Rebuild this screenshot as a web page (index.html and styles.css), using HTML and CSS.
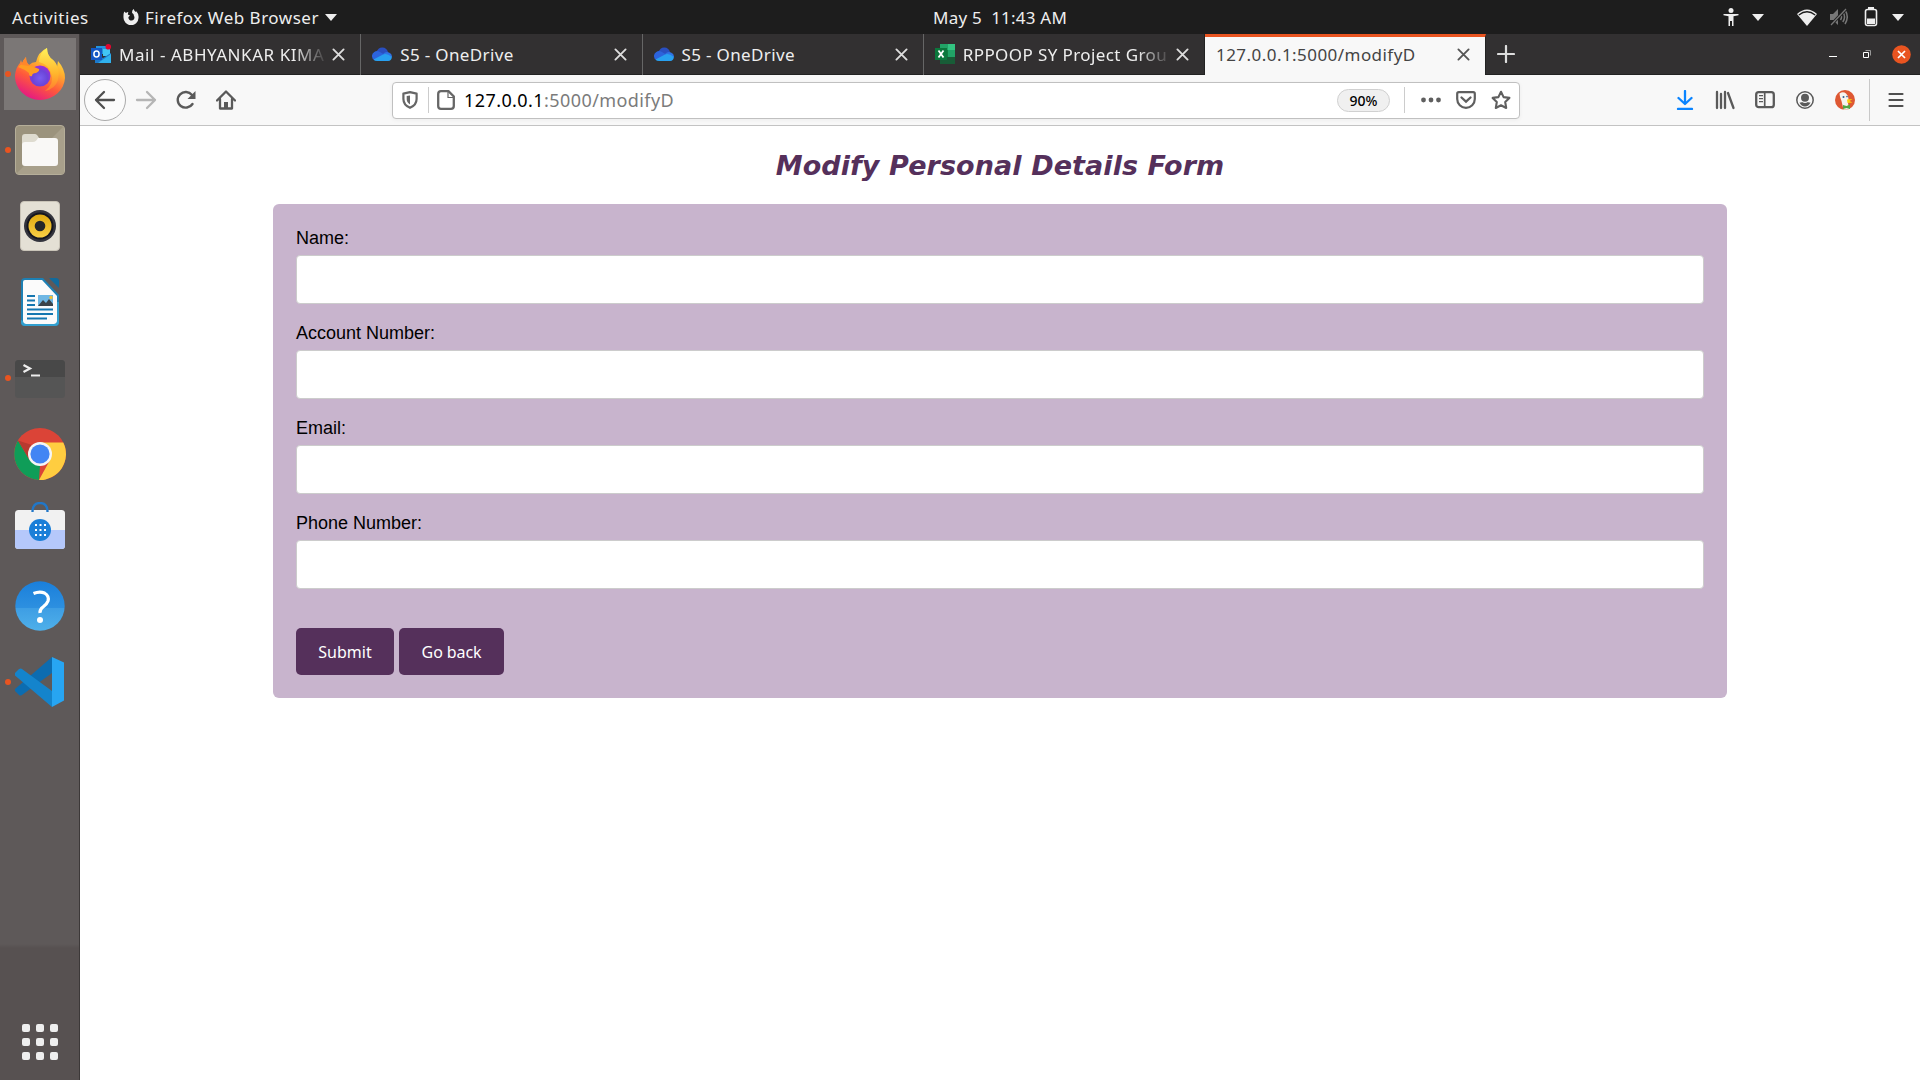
FILE: index.html
```
<!DOCTYPE html>
<html lang="en">
<head>
<meta charset="utf-8">
<title>127.0.0.1:5000/modifyD</title>
<link rel="stylesheet" href="styles.css">
</head>
<body>
<svg width="0" height="0" class="defs">
  <defs>
    <linearGradient id="ffBody" x1=".8" y1="0" x2=".3" y2="1"><stop offset="0" stop-color="#fff44f"/><stop offset=".35" stop-color="#ffb02e"/><stop offset=".65" stop-color="#ff5a3a"/><stop offset="1" stop-color="#e31587"/></linearGradient>
    <linearGradient id="ffFlame" x1=".5" y1="0" x2=".5" y2="1"><stop offset="0" stop-color="#fff25a"/><stop offset=".6" stop-color="#ffb52c"/><stop offset="1" stop-color="#ff7a30"/></linearGradient>
    <radialGradient id="ffGlobe" cx=".5" cy=".6" r=".6"><stop offset="0" stop-color="#7a5cf0"/><stop offset=".6" stop-color="#6b45d8"/><stop offset="1" stop-color="#a52ad8"/></radialGradient>
    <linearGradient id="helpTop" x1="0" y1="0" x2="0" y2="1"><stop offset="0" stop-color="#1a7fdb"/><stop offset=".54" stop-color="#2d90e0"/><stop offset=".55" stop-color="#3e9ee4"/><stop offset="1" stop-color="#4fb0ea"/></linearGradient>
    <linearGradient id="gold" x1="0" y1="0" x2="0" y2="1"><stop offset="0" stop-color="#e0aa10"/><stop offset="1" stop-color="#f9cf45"/></linearGradient>
    <symbol id="cloud" viewBox="0 0 20 14">
      <path d="M4.500 5.500Q6 .3 10.500.5q4 .2 5.500 4.500l-3 5-8-3z" fill="#2a4fc0"/>
      <path d="M0 9.500A5 5 0 0 1 7.500 4.800l6 3.500-11 4.700Q0 12 0 9.500z" fill="#2c63dc"/>
      <path d="M11 7q3-3 6-1.500A4.500 4.500 0 0 1 20 10l-3 2z" fill="#2f72e4"/>
      <path d="M1.500 12.500 11 7.500Q15 6 19.700 10a3.500 3.500 0 0 1-3.500 4H5q-2.500 0-3.500-1.500z" fill="#28a0f0"/>
    </symbol>
    <symbol id="close" viewBox="0 0 14 14"><path d="M1.500 1.500l11 11m0-11l-11 11" fill="none" stroke="currentColor" stroke-width="2" stroke-linecap="round"/></symbol>
    <symbol id="caret" viewBox="0 0 12 7"><path d="M0 0h12L6 7z" fill="currentColor"/></symbol>
  </defs>
</svg>

<header class="topbar">
  <span class="activities">Activities</span>
  <svg class="app-icon" viewBox="0 0 16 16"><path d="M1.200 2.500 3 4q1-1 2.300-1L4.800 5.500 7 6.500 5.500 8a3 3 0 1 0 5.500-1q0-2-1.800-3Q8.500 1.500 10.800 0q.2 2 2 3l.5-.8Q16 5 15.500 9A7.500 7.500 0 0 1 .5 8.500Q.3 5 1.200 2.500z" fill="#eee"/></svg>
  <span class="app-name">Firefox Web Browser</span>
  <svg class="caret"><use href="#caret"/></svg>
  <time class="clock">May 5&nbsp; 11:43 AM</time>
  <div class="status">
    <svg class="access" width="16" height="18" viewBox="0 0 16 18" fill="#eee"><circle cx="8" cy="2.600" r="2.500"/><path d="M.5 6h15v1.300l-5 1V18H9v-5H7v5H5.500V8.300l-5-1z"/></svg>
    <svg class="caret access-caret"><use href="#caret"/></svg>
    <svg class="wifi" width="20" height="17" viewBox="0 0 20 17"><path d="M0 5Q10-4 20 5L10 17z" fill="#eee"/><path d="M1.800 6Q10-.5 18.200 6" fill="none" stroke="#1d1d1d" stroke-width="1.300"/></svg>
    <svg class="volume" width="18" height="18" viewBox="0 0 18 18" fill="none" stroke="#777" stroke-width="1.500"><path d="M0 6h3l5-5v16l-5-5H0z" fill="#777" stroke="none"/><path d="M10.500 6q2 3 0 6M12.800 4q3.500 5 0 10M15 2q4.500 7 0 14"/><path d="M1 17 16 1" stroke="#1d1d1d" stroke-width="3"/><path d="M1 17 16 1" stroke-width="1.200"/></svg>
    <svg class="battery" width="14" height="20" viewBox="0 0 14 20"><path d="M4 0h6v2H4z" fill="#eee"/><rect x="1.500" y="2.500" width="11" height="16" rx="2" fill="none" stroke="#eee" stroke-width="1.600"/><path d="M3 11.500h8v5.500H3z" fill="#eee"/></svg>
    <svg class="caret"><use href="#caret"/></svg>
  </div>
</header>

<div class="desktop">
  <nav class="dock">
    <div class="slot active running">
      <svg width="50" height="52" viewBox="0 0 50 52">
        <path d="M11 9q0 6 3 8Q17 14 21 14q2-10 11-14 0 8 6 12 3 2 4 7l1-6q7 8 7 17A25 23 0 0 1 25 52 25 24 0 0 1 0 27Q1 19 5 15l1-3 1 3q2-4 4-6z" fill="url(#ffBody)"/>
        <path d="M24 14Q24 5 32 0q0 8 6 12 8 8 5 20-3 9-13 11 10-8 6-18Q33 16 24 14z" fill="url(#ffFlame)"/>
        <circle cx="25" cy="28" r="10.500" fill="url(#ffGlobe)"/>
        <path d="M3 19q4-5 11-2l10 4q1 2-3 4-4 0-4 3-3 1-3-3Q9 21 3 19z" fill="#ff9d22"/>
        <path d="M11 9q0 6 4 9l-8-1q1-5 4-8z" fill="#ff862b"/>
      </svg>
    </div>
    <div class="slot running">
      <svg width="50" height="50" viewBox="0 0 50 50"><rect x=".5" y=".5" width="49" height="49" rx="3.500" fill="#9b937d" stroke="#b5ae99"/><path d="M1 49 49 1v48z" fill="#a8a08b"/><path d="M7 12q0-3 3-3h10q2 0 4 4h5v8H7z" fill="#dedbcf"/><path d="M7 20q0-3 3-3h8q3 0 5-4h17q3 0 3 3v22q0 3-3 3H10q-3 0-3-3z" fill="#f9f8f6"/></svg>
    </div>
    <div class="slot">
      <svg width="40" height="50" viewBox="0 0 40 50"><rect x=".5" y=".5" width="39" height="49" rx="3.500" fill="#e4e0d5" stroke="#c9c4b8"/><circle cx="20" cy="25" r="16" fill="#33343d"/><circle cx="20" cy="25" r="13.500" fill="#15161f"/><circle cx="20" cy="25" r="11.500" fill="url(#gold)"/><circle cx="20" cy="25" r="5.300" fill="#24272a"/></svg>
    </div>
    <div class="slot">
      <svg width="40" height="50" viewBox="0 0 40 50"><path d="M5 1h18l16 17v27q0 4-4 4H5q-4 0-4-4V5q0-4 4-4z" fill="#1d80b4"/><path d="M29 1h7q3 0 3 3v7z" fill="#126a9b"/><path d="M5 3h17l15 16v25q0 3-3 3H6q-3 0-3-3V5q0-2 2-2z" fill="#fbfbfb"/><path d="M1 43v2q0 4 4 4h30q4 0 4-4v-20h-2v19q0 3-3 3H6q-3 0-3-3z" fill="#32a0d0"/><path d="M7 19h8M7 23.500h8M7 28h8M7 32.500h26M7 37h26M7 41.500h20" stroke="#1677b0" stroke-width="2"/><path d="M18 18h15v11H18z" fill="#6fb7e4"/><path d="M18 29l5-6 3 3 3-4 4 5v2z" fill="#3c4348"/><circle cx="31" cy="20.500" r="1.700" fill="#f1c232"/></svg>
    </div>
    <div class="slot running">
      <svg class="terminal" width="50" height="38" viewBox="0 0 50 38"><rect width="50" height="38" rx="3.500" fill="#555"/><path d="M0 17V3.500Q0 0 3.500 0h43Q50 0 50 3.500V17z" fill="#484848"/><path d="M8.500 5l6.500 3.500-6.500 3.500" fill="none" stroke="#eee" stroke-width="2.200"/><path d="M16 15.500h9" stroke="#eee" stroke-width="2"/></svg>
    </div>
    <div class="slot">
      <svg width="52" height="52" viewBox="0 0 52 52"><circle cx="26" cy="26" r="26" fill="#db4437"/><path d="M4 12.500 15.500 32 26 37.500 25 52A26 26 0 0 1 4 12.500z" fill="#0f9d58"/><path d="M26 14.500h23.300A26 26 0 0 1 25 52l11-20z" fill="#ffcd40"/><path d="M4 12.500 15 31q-3-8 3-14z" fill="#b83a30"/><circle cx="26" cy="26" r="12" fill="#f5f5f5"/><circle cx="26" cy="26" r="9.600" fill="#4285f4"/></svg>
    </div>
    <div class="slot">
      <svg class="bag" width="50" height="47" viewBox="0 0 50 47"><rect y="8" width="50" height="39" rx="3.500" fill="#f1f1f1"/><path d="M0 28h50v15.500q0 3.500-3.500 3.500h-43Q0 47 0 43.500z" fill="#b5c8fb"/><path d="M17.500 10q0-9 7.500-9t7.500 9" fill="none" stroke="#2177c8" stroke-width="2.300"/><circle cx="25" cy="28" r="11" fill="#1b7fd8"/><path d="M20 23h11M20 28h11M20 33h11" stroke="#fff" stroke-width="2" stroke-dasharray="2 2.500"/></svg>
    </div>
    <div class="slot">
      <svg width="50" height="50" viewBox="0 0 50 50"><circle cx="25" cy="25" r="24.700" fill="url(#helpTop)"/><path d="M18.500 12.500q6-2.500 11-.5 5 3 3.500 8-1 3-5 6-3.500 2.500-3 6" fill="none" stroke="#fff" stroke-width="3.200"/><circle cx="25" cy="39" r="3" fill="#fff"/></svg>
    </div>
    <div class="slot running">
      <svg width="50" height="50" viewBox="0 0 50 50"><path d="M37 0v16L7 38q-2 1-3 0l-4-4v-2z" fill="#0c6cb0"/><path d="M0 16l4-4q2-1 3 0l30 22v16L0 18.500z" fill="#1484cc"/><path d="M37 0l12 5.500v38L37 50z" fill="#27a5f2"/></svg>
    </div>
    <div class="apps"><i></i><i></i><i></i><i></i><i></i><i></i><i></i><i></i><i></i></div>
  </nav>

  <div class="browser">
    <div class="tabs">
      <div class="tab">
        <svg class="fav" width="20" height="20" viewBox="0 0 20 20"><path d="M5 2h13v8H5z" fill="#2394dd"/><path d="M12 5h7v7h-7z" fill="#42c5f5"/><path d="M4 9l8 5 8-5v10H4z" fill="#1c79cb"/><path d="M7 19l13-9v9z" fill="#30b1ed"/><path d="M0 4h11v12H0z" fill="#1458c4"/><ellipse cx="5.500" cy="10" rx="2.600" ry="3" fill="none" stroke="#fff" stroke-width="1.500"/><circle cx="17.300" cy="2.800" r="2.800" fill="#e3062f"/></svg>
        <span class="label mail fade">Mail - ABHYANKAR KIMA</span><svg class="x"><use href="#close"/></svg>
      </div>
      <div class="tab"><svg class="fav" width="20" height="14"><use href="#cloud"/></svg><span class="label drive">S5 - OneDrive</span><svg class="x"><use href="#close"/></svg></div>
      <div class="tab"><svg class="fav" width="20" height="14"><use href="#cloud"/></svg><span class="label drive">S5 - OneDrive</span><svg class="x"><use href="#close"/></svg></div>
      <div class="tab">
        <svg class="fav" width="20" height="20" viewBox="0 0 20 20"><path d="M5 0h15v20H5z" fill="#107c41"/><path d="M5 0h8v6H5z" fill="#21a366"/><path d="M13 0h7v6h-7z" fill="#33c481"/><path d="M13 6h7v7h-7z" fill="#21a366"/><path d="M5 13h15v7H5z" fill="#185c37"/><path d="M0 4h12v12H0z" fill="#0b773c"/><path d="M3.500 6.500l5 7m0-7l-5 7" stroke="#fff" stroke-width="1.800"/></svg>
        <span class="label sheet fade">RPPOOP SY Project Grou</span><svg class="x"><use href="#close"/></svg>
      </div>
      <div class="tab current"><span class="label local">127.0.0.1:5000/modifyD</span><svg class="x"><use href="#close"/></svg></div>
      <svg class="plus" width="18" height="18" viewBox="0 0 18 18"><path d="M9 1v16M1 9h16" stroke="#ddd" stroke-width="2.200" stroke-linecap="round"/></svg>
      <div class="window-buttons">
        <svg width="8" height="20" viewBox="0 0 8 20"><path d="M0 12.500h8" stroke="#fff"/></svg>
        <svg width="8" height="8" viewBox="0 0 8 8"><path d="M.5 2.500h5v5h-5z" fill="none" stroke="#fff"/><path d="M2.500.5h5v5" fill="none" stroke="#999"/></svg>
        <svg width="19" height="19" viewBox="0 0 19 19"><circle cx="9.500" cy="9.500" r="9.300" fill="#e95420"/><path d="M6 6l7 7m0-7l-7 7" stroke="#fff" stroke-width="1.700"/></svg>
      </div>
    </div>

    <div class="toolbar">
      <span class="back"><svg width="22" height="20" viewBox="0 0 22 20"><path d="M20 10H2M10 2 2 10l8 8" fill="none" stroke="#4f4f4f" stroke-width="2.300" stroke-linecap="round" stroke-linejoin="round"/></svg></span>
      <svg class="forward" width="22" height="20" viewBox="0 0 22 20"><path d="M2 10h18M12 2l8 8-8 8" fill="none" stroke="#b5b5b5" stroke-width="2.300" stroke-linecap="round" stroke-linejoin="round"/></svg>
      <svg class="reload" width="20" height="20" viewBox="0 0 20 20"><path d="M16.500 14A8 7.800 0 1 1 16 5" fill="none" stroke="#5a5a5a" stroke-width="2.400" stroke-linecap="round"/><path d="M19.500 1v8h-8z" fill="#5a5a5a"/></svg>
      <svg class="home" width="20" height="20" viewBox="0 0 20 20"><path d="M1 10.500 10 1.500l9 9M4 9v9.500h12V9" fill="none" stroke="#5a5a5a" stroke-width="2.300" stroke-linecap="round" stroke-linejoin="round"/><path d="M8 18v-6h4v6z" fill="#5a5a5a"/></svg>
      <div class="urlbar">
        <svg class="shield" width="16" height="18" viewBox="0 0 16 18"><path d="M8 1.200 14.600 2.600V8Q14.600 14 8 16.800 1.400 14 1.400 8V2.600z" fill="none" stroke="#666" stroke-width="2.200" stroke-linejoin="round"/><path d="M8 4.500v9Q4.500 11 4.700 8V5z" fill="#666"/></svg>
        <i class="rule"></i>
        <svg class="page-icon" width="18" height="20" viewBox="0 0 18 20"><path d="M4 1.200h7.500L16.800 6.500V16q0 2.800-2.800 2.800H4Q1.200 18.800 1.200 16V4Q1.200 1.200 4 1.200z" fill="none" stroke="#666" stroke-width="2.300"/><path d="M11 1.500v6h6" fill="none" stroke="#666" stroke-width="1.200"/></svg>
        <span class="url"><b>127.0.0.1</b>:5000/modifyD</span>
        <span class="zoom">90%</span>
        <i class="rule second"></i>
        <svg class="dots" width="20" height="6" viewBox="0 0 20 6" fill="#5f5f5f"><circle cx="2.500" cy="3" r="2.400"/><circle cx="10" cy="3" r="2.400"/><circle cx="17.500" cy="3" r="2.400"/></svg>
        <svg class="pocket" width="20" height="18" viewBox="0 0 20 18"><path d="M2.800 1.200h14.400q1.600 0 1.600 1.600V8a8.800 8.800 0 0 1-17.600 0V2.800q0-1.600 1.600-1.600z" fill="none" stroke="#5f5f5f" stroke-width="2.200"/><path d="M5.500 6.500 10 10.700l4.500-4.200" fill="none" stroke="#5f5f5f" stroke-width="2.300" stroke-linecap="round"/></svg>
        <svg class="star" width="20" height="20" viewBox="0 0 20 20"><path d="M10 1.800l2.600 5.300 5.800.8-4.200 4.100 1 6L10 15.300 4.800 18l1-6L1.600 7.900l5.800-.8z" fill="none" stroke="#5f5f5f" stroke-width="2.100" stroke-linejoin="round"/></svg>
      </div>
      <div class="tools">
        <svg width="20" height="20" viewBox="0 0 20 20"><path d="M10 1v13M3.500 8 10 14l6.500-6M3 19h14" fill="none" stroke="#0a84ff" stroke-width="2.300" stroke-linecap="round" stroke-linejoin="round"/></svg>
        <svg width="20" height="20" viewBox="0 0 20 20"><path d="M2 2v16M6 4v14M10 2v16M13 3l5.500 15" fill="none" stroke="#5a5a5a" stroke-width="2.300" stroke-linecap="round"/></svg>
        <svg width="20" height="20" viewBox="0 0 20 20"><rect x="1.200" y="2.200" width="17.600" height="15" rx="2.500" fill="none" stroke="#5a5a5a" stroke-width="2.300"/><path d="M9.700 2v15" stroke="#5a5a5a" stroke-width="1.700"/><path d="M4 5.700h4M4 8.700h4M4 11.700h4" stroke="#5a5a5a" stroke-width="1.300"/></svg>
        <svg width="20" height="20" viewBox="0 0 20 20"><circle cx="10" cy="10" r="8.200" fill="none" stroke="#5a5a5a" stroke-width="1.500"/><circle cx="10" cy="7.800" r="4" fill="#5a5a5a"/><path d="M4.500 12.500q1.500.3 2.500-.5 3 2 6 0 1 .8 2.500.5-1.800 4-5.500 4t-5.500-4z" fill="#5a5a5a"/></svg>
        <svg width="20" height="20" viewBox="0 0 20 20"><circle cx="10" cy="10" r="10" fill="#de5833"/><path d="M4.500 3.500Q8 1 11 3.500q2.500 2 2.500 5.500L13 13l1 6q-3 1.200-5.500.5L6.500 11Q4.500 6 4.500 3.500z" fill="#f6f4ef"/><path d="M12 9.500l5.500-.5-3 2 3 1.500-5 .5z" fill="#fdd20a"/><path d="M8 15l3.500 1 3.500-1.500V19l-3.500-1L8 19z" fill="#52a844"/><circle cx="8.500" cy="7" r="1" fill="#2d5e8e"/><circle cx="12" cy="6.600" r=".8" fill="#2d5e8e"/></svg>
      </div>
      <i class="tool-rule"></i>
      <svg class="menu" width="16" height="16" viewBox="0 0 16 16"><path d="M1.500 2h13M1.500 8h13M1.500 14h13" stroke="#4f4f4f" stroke-width="2.200" stroke-linecap="round"/></svg>
    </div>

    <main class="page">
      <h1>Modify Personal Details Form</h1>
      <form class="details">
        <label for="name">Name:</label><input id="name" type="text">
        <label for="account">Account Number:</label><input id="account" type="text">
        <label for="email">Email:</label><input id="email" type="text">
        <label for="phone">Phone Number:</label><input id="phone" type="text">
        <div class="actions"><button type="button" class="submit">Submit</button><button type="button" class="goback">Go back</button></div>
      </form>
    </main>
  </div>
</div>
</body>
</html>
```
FILE: styles.css
```
* { box-sizing: border-box; }
body { margin: 0; width: 1920px; height: 1080px; overflow: hidden; display: flex; flex-direction: column; background: #fff; font-family: "Noto Sans", "Open Sans", sans-serif; }
svg { display: block; flex: none; }
.defs { position: absolute; }

.topbar { height: 34px; flex: none; display: flex; align-items: center; background: #1d1d1d; color: #eee; font-size: 17px; white-space: nowrap; }
.activities { width: 111px; padding-left: 12px; margin-right: 12px; letter-spacing: .6px; }
.app-icon { width: 16px; height: 16px; }
.app-name { width: 175px; margin: 0 5px 0 6px; letter-spacing: .5px; }
.caret { width: 12px; height: 7px; color: #eee; }
.clock { width: 136px; margin-left: 596px; letter-spacing: .22px; }
.status { display: flex; align-items: center; margin-left: auto; padding-right: 16px; }
.access-caret { margin: 0 33px 0 13px; }
.wifi { margin-right: 13px; }
.volume { margin-right: 16px; }
.battery { margin-right: 14px; margin-bottom: 1px; }

.desktop { display: flex; flex: 1; min-height: 0; }
.dock { width: 80px; flex: none; display: flex; flex-direction: column; align-items: center; padding: 4px 0 20px; background: linear-gradient(#5e5959 0 910px, #575151 914px); border-right: 1px solid #3c3838; }
.slot { width: 79px; height: 72px; margin-bottom: 4px; flex: none; display: grid; grid-template-columns: 15px 50px; align-items: center; justify-items: center; }
.slot::before { content: ""; width: 6px; height: 6px; border-radius: 50%; }
.running::before { background: #e95420; }
.active { background: linear-gradient(#7b7776, #7b7776) 4px 0 / 72px 72px no-repeat; }
.terminal { margin-top: 2px; }
.bag { margin-top: -9px; }
.apps { display: grid; grid-template-columns: repeat(3, 8px); gap: 6px; margin-top: auto; }
.apps i { width: 8px; height: 8px; border-radius: 2px; background: #eee; }

.browser { flex: 1; min-width: 0; display: flex; flex-direction: column; }
.tabs { height: 41px; flex: none; display: flex; align-items: center; background: #323031; border-bottom: 1px solid #222; font-size: 17px; color: #eee; }
.tab { width: 281.250px; height: 41px; display: flex; align-items: center; padding: 0 15px 0 11px; border-right: 1px solid #666; flex: none; }
.tab:nth-child(4) { border-right-color: #222; }
.fav { margin-right: 8px; }
.label { white-space: nowrap; flex: 1; padding-top: 1px; }
.mail { letter-spacing: .55px; }
.drive { letter-spacing: .35px; }
.sheet { letter-spacing: .4px; }
.local { letter-spacing: .45px; }
.fade { -webkit-mask-image: linear-gradient(90deg, #000 82%, transparent 98%); mask-image: linear-gradient(90deg, #000 82%, transparent 98%); }
.x { width: 13px; height: 13px; color: #ddd; }
.current { background: #f8f8f8; color: #444; border-top: 3px solid #e95420; border-right-color: #222; padding-bottom: 3px; }
.current .x { color: #555; }
.plus { margin-left: 11px; }
.window-buttons { margin-left: auto; margin-right: 9px; display: flex; align-items: center; gap: 21px; }
.window-buttons svg:nth-child(1) { margin-right: 5px; }

.toolbar { height: 51px; flex: none; display: flex; align-items: center; background: #f8f8f8; border-bottom: 1px solid #c3c3c3; padding-left: 4px; }
.back { width: 42px; height: 42px; border: 1px solid #aaa; border-radius: 50%; background: #fbfbfb; display: grid; place-items: center; }
.forward { margin-left: 9px; }
.reload { margin-left: 19px; }
.home { margin-left: 20px; }
.urlbar { width: 1128px; height: 37px; margin-left: 156px; display: flex; align-items: center; background: #fff; border: 1px solid #c0c0c0; border-radius: 4px; box-shadow: 0 1px 4px #0000000d; padding-left: 9px; }
.rule { width: 1px; height: 26px; background: #ccc; margin: 0 8px 0 10px; }
.url { font-size: 18px; color: #7b7b7b; margin-left: 9px; white-space: nowrap; letter-spacing: .42px; }
.url b { font-weight: 400; color: #000; }
.zoom { margin-left: auto; width: 53px; height: 23px; border: 1px solid #d0d0d0; border-radius: 12px; background: #f0f0f0; font-size: 14px; font-weight: 500; line-height: 21px; text-align: center; }
.second { margin: 0 15px 0 14px; }
.dots { margin-left: 1px; }
.pocket { margin: 0 15px; }
.star { margin-right: 8px; }
.tools { display: flex; gap: 20px; margin-left: 155px; }
.tool-rule { width: 1px; height: 42px; background: #c9c9c9; margin: 0 18px 0 14px; }

.page { flex: 1; display: flex; flex-direction: column; align-items: center; }
h1 { margin: 24px 0 22px; font: italic bold 27px/32px "DejaVu Sans", sans-serif; letter-spacing: .08px; color: #55305b; white-space: nowrap; }
.details { width: 1454px; height: 494px; display: flex; flex-direction: column; padding: 24px 23px 23px; background: #c8b4cd; border-radius: 6px; font-family: "Liberation Sans", Arial, sans-serif; font-size: 18px; line-height: 21px; }
.details label { height: 21px; margin-bottom: 6px; }
.details input { width: 100%; height: 49px; margin: 0 0 19px; border: 1px solid #ccc; border-radius: 4px; background: #fff; flex: none; }
.actions { display: flex; gap: 5px; margin-top: 20px; }
button { height: 47px; border: 0; border-radius: 5px; background: #55305b; color: #fff; padding: 0; font: 16px "Noto Sans", sans-serif; }
.submit { width: 98px; }
.goback { width: 105px; letter-spacing: -.1px; }
```
